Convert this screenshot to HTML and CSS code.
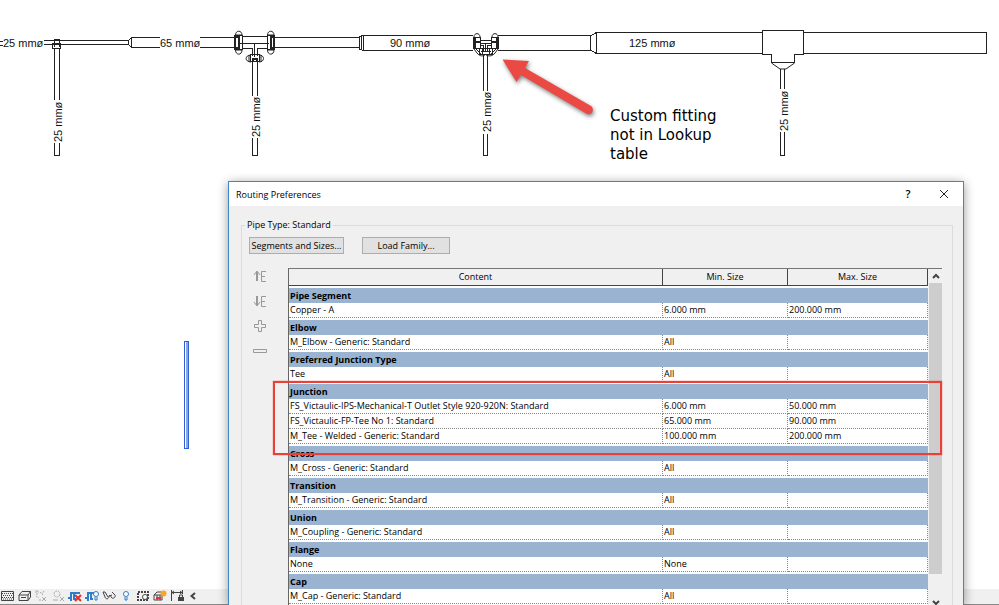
FILE: index.html
```html
<!DOCTYPE html>
<html lang="en">
<head>
    <meta charset="UTF-8">
    <meta name="viewport" content="width=device-width, initial-scale=1.0">
    <title>Routing Preferences</title>
    <link rel="stylesheet" href="styles.css">
</head>
<body>

<main class="canvas">
    <!-- pipe run -->
    <svg class="drawing" width="999" height="460" viewBox="0 0 999 460">
        <g class="lines">
            <!-- 25 mm run -->
            <path d="M0 41.5H3M0 45.5H3M44 40.5H128.500M44 44.500H128.500"/>
            <path d="M54.500 39.500H59.500V43.500H54.500ZM52.500 43.500H60.500V48.500H52.500ZM54.500 44V47M59.500 44V47"/>
            <path d="M54.500 49V100M59.500 49V100M54.500 143V155.500H59.500V143"/>
            <path d="M128.500 40.500V44.500L131.500 47.500V37.500Z"/>
            <!-- 65 mm run -->
            <path d="M160 37.500H131.500V47.500H160M200 37.500H234M200 47.500H234M274 37.500H359.500V47.500H274"/>
            <path d="M242 36.500H267M239 43.500H269M242 48.500H252.500V56M257.500 56V48.500H267M254.500 43.500V57"/>
            <path d="M234.500 35.500H242.500V49.500H234.500ZM267.500 35.500H274.500V49.500H267.500Z"/>
            <path stroke-width="2" d="M235 37H239V48H235ZM271 37H274V48H271Z"/>
            <path d="M250.500 54.500H259.500V61.500H250.500ZM252.500 62V96M257.500 62V96M252.500 138V155.500H257.500V138"/>
            <path stroke-width="2" d="M253 62V59H257V62"/>
            <!-- 90 mm run -->
            <path d="M359.500 36.500L363.500 35.500V50.500L359.500 49.500ZM361.500 36V50"/>
            <path d="M363.500 35.500H473M363.500 50.500H473M498 35.500H590.500V50.500H498"/>
            <path d="M483.500 55V91M487.500 55V91M483.500 134V155.500H487.500V134"/>
            <path d="M473.500 37.500H480.500V48.500H473.500ZM491.500 37.500H498.500V48.500H491.500ZM480 40.500H491M480 43.500H491M480 45.500H483.500V52M487.500 52V45.500H491M485.500 43V51"/>
            <path stroke-width="2" d="M473 42H480M492 42H499M475 38V48M497 38V48"/>
            <path d="M479.500 48.500H492.500V54.500H479.500ZM481 51.500H491M482.500 49V54M489.500 49V54"/>
            <!-- 125 mm run -->
            <path d="M591 35.500L596.500 32.500V53.500L591 50.500"/>
            <path d="M762 32.500H596.500V53.500H762M803 32.500H986.500V53.500H803"/>
            <path d="M762.500 30.500H803.500V54.500H794.500V62.500H771.500V54.500H762.500Z"/>
            <path d="M780.500 69V89M784.500 69V89M780.500 132V155.500H784.500V132"/>
        </g>
        <g class="curves">
            <path d="M235.500 35C235.500 30 242 30 242 35ZM267.500 35C267.500 30 274 30 274 35ZM235.500 50C235.500 55.500 242 55.500 242 50ZM267.500 50C267.500 55.500 274 55.500 274 50Z"/>
            <path d="M251 55C244.500 55 244.500 62 251 62M259 55C265 55 265 62 259 62M249 55V62M261 55V62"/>
            <path d="M474 37C474 32.500 480 32.500 480 37M492 37C492 32.500 498 32.500 498 37M474 49L477 53C480 57 484 56 485 55M498 49L495 53C492 57 488 56 486 55M476 49L482 55M496 49L490 55"/>
            <path d="M771.500 63L780 69H786L794.500 63"/>
        </g>
        <g class="sizes">
            <text x="3" y="47">25 mmø</text>
            <text x="160" y="47">65 mmø</text>
            <text x="390" y="47">90 mmø</text>
            <text x="629" y="47">125 mmø</text>
            <text transform="translate(62 142) rotate(-90)">25 mmø</text>
            <text transform="translate(260 137) rotate(-90)">25 mmø</text>
            <text transform="translate(491 132) rotate(-90)">25 mmø</text>
            <text transform="translate(788 131) rotate(-90)">25 mmø</text>
        </g>
        <!-- selected pipe -->
        <rect x="186" y="342" width="3" height="106" fill="#8ba6e0"/>
        <rect x="184.500" y="341.500" width="4" height="107" fill="none" stroke="#2f5fd0"/>
        <g class="arrow">
            <path d="M502.500 59.500L529 61L525 68L591 106C595 109 592 116 587 114L521 75L516.500 82Z"/>
        </g>
    </svg>
    <p class="note">Custom fitting<br>not in Lookup<br>table</p>
</main>

<footer class="view-bar">
    <button aria-label="Detail level"><svg viewBox="0 0 14 14"><path class="k" d="M1.500 2.500H13.500V11.500H1.500Z"/><path class="k" stroke-dasharray="1 1" d="M2 4.500H13M3 6.500H13M2 8.500H13M3 10H13"/></svg></button>
    <button aria-label="Visual style"><svg viewBox="0 0 14 14"><path class="k" d="M2 6L5 2.500H13.500L11 6ZM2 6V11.500H11V6M11 11.500L13.500 8V2.500M4 8.500H9"/></svg></button>
    <button aria-label="Sun path"><svg viewBox="0 0 14 14"><path class="g" stroke-dasharray="2 1" d="M1 3H5M3 1V6M2 7L5 9M6 3L9 6M10 2L8 5M5 11H8"/><path class="g" d="M8 8L12 12M12 8L8 12"/></svg></button>
    <button aria-label="Shadows"><svg viewBox="0 0 14 14"><circle class="g" cx="6" cy="5" r="3" stroke-dasharray="2 1"/><path class="g" d="M2 11H7M9 8L13 12M13 8L9 12"/></svg></button>
    <button aria-label="Crop view"><svg viewBox="0 0 14 14"><path class="b thick" d="M3 12V4H12M0 9H4M6 3V10H8"/><path class="r" d="M7 6L13 12M13 6L7 12"/></svg></button>
    <button aria-label="Show crop region"><svg viewBox="0 0 14 14"><path class="b thick" d="M3 12V4H9M0 9H4M6 3V10H8"/><circle class="b" cx="11" cy="5" r="2.500" fill="#fff"/><path class="b" d="M10 8V11H12V8"/></svg></button>
    <button aria-label="Temporary hide"><svg viewBox="0 0 14 14"><path class="k" d="M1 3H3L6 8M1 3L3 8C4 11 7 10 7 7C8 6 9 7 9 8C11 11 14 8 13 6L10 3M7 7L10 6"/></svg></button>
    <button aria-label="Reveal hidden"><svg viewBox="0 0 14 14"><circle class="b" cx="7" cy="5" r="2.500" fill="#fff"/><path class="b" d="M6 8V11H8V8"/></svg></button>
    <button aria-label="View properties"><svg viewBox="0 0 14 14"><path class="k" stroke-width="2" stroke-dasharray="2 1" d="M2 3H12V11H2Z"/><circle class="k" cx="9" cy="8" r="2.500" fill="#fff"/></svg></button>
    <button aria-label="Analytical model"><svg viewBox="0 0 14 14"><path class="k" d="M1 6L4 3H8M1 6V11H9V6ZM4 6V11M7 6V11"/><path class="r" d="M3 9H8"/><circle cx="10.500" cy="4.500" r="3" fill="#f5a623"/></svg></button>
    <button aria-label="Constraints"><svg viewBox="0 0 14 14"><path class="k" d="M1.500 1V12M12.500 1V5M2 3.500H12M4 2L2 3.500L4 5M10 2L12 3.500L10 5"/><rect x="8" y="8" width="6" height="4" fill="#444"/><path class="k" d="M9.500 8V6H12.500V8"/></svg></button>
    <button aria-label="Collapse"><svg viewBox="0 0 14 14"><path class="k thick" d="M8 4L4.500 7L8 10"/></svg></button>
</footer>

<section class="dialog" role="dialog" aria-labelledby="dialog-title">
    <header class="title-bar">
        <h1 id="dialog-title">Routing Preferences</h1>
        <button class="help">?</button>
        <button class="close" aria-label="Close"><svg viewBox="0 0 10 10"><path d="M1 1L9 9M9 1L1 9"/></svg></button>
    </header>

    <fieldset class="group">
        <legend>Pipe Type: Standard</legend>
        <div class="actions">
            <button class="btn segments">Segments and Sizes...</button>
            <button class="btn load">Load Family...</button>
        </div>
        <div class="editor">
            <div class="tools">
                <button aria-label="Move row up"><svg viewBox="0 0 14 14"><path stroke-width="2" d="M4 3V12"/><path d="M1 6L4 2L7 6M13 2.500H8.500V12.500H13M8.500 7.500H12"/></svg></button>
                <button aria-label="Move row down"><svg viewBox="0 0 14 14"><path stroke-width="2" d="M4 2V11"/><path d="M1 8L4 12L7 8M13 2.500H8.500V12.500H13M8.500 7.500H12"/></svg></button>
                <button aria-label="Add row"><svg viewBox="0 0 14 14"><path d="M5.500 1.500H8.500V5.500H12.500V8.500H8.500V12.500H5.500V8.500H1.500V5.500H5.500Z"/></svg></button>
                <button aria-label="Remove row"><svg viewBox="0 0 14 14"><path d="M.5 5.500H13.500V8.500H.5Z"/></svg></button>
            </div>
            <div class="grid">
                <table>
                    <colgroup><col><col class="min"><col class="max"></colgroup>
                    <thead>
                        <tr><th>Content</th><th>Min. Size</th><th>Max. Size</th></tr>
                    </thead>
                    <tbody>
                        <tr class="part"><th colspan="3">Pipe Segment</th></tr>
                        <tr><td>Copper - A</td><td>6.000 mm</td><td>200.000 mm</td></tr>
                        <tr class="part"><th colspan="3">Elbow</th></tr>
                        <tr><td>M_Elbow - Generic: Standard</td><td>All</td><td></td></tr>
                        <tr class="part"><th colspan="3">Preferred Junction Type</th></tr>
                        <tr><td>Tee</td><td>All</td><td></td></tr>
                        <tr class="part"><th colspan="3">Junction</th></tr>
                        <tr><td>FS_Victaulic-IPS-Mechanical-T Outlet Style 920-920N: Standard</td><td>6.000 mm</td><td>50.000 mm</td></tr>
                        <tr><td>FS_Victaulic-FP-Tee No 1: Standard</td><td>65.000 mm</td><td>90.000 mm</td></tr>
                        <tr><td>M_Tee - Welded - Generic: Standard</td><td>100.000 mm</td><td>200.000 mm</td></tr>
                        <tr class="part"><th colspan="3">Cross</th></tr>
                        <tr><td>M_Cross - Generic: Standard</td><td>All</td><td></td></tr>
                        <tr class="part"><th colspan="3">Transition</th></tr>
                        <tr><td>M_Transition - Generic: Standard</td><td>All</td><td></td></tr>
                        <tr class="part"><th colspan="3">Union</th></tr>
                        <tr><td>M_Coupling - Generic: Standard</td><td>All</td><td></td></tr>
                        <tr class="part"><th colspan="3">Flange</th></tr>
                        <tr><td>None</td><td>None</td><td></td></tr>
                        <tr class="part"><th colspan="3">Cap</th></tr>
                        <tr><td>M_Cap - Generic: Standard</td><td>All</td><td></td></tr>
                    </tbody>
                </table>
                <div class="scrollbar">
                    <button aria-label="Scroll up"><svg viewBox="0 0 8 8"><path d="M1 6L4 3L7 6"/></svg></button>
                    <div class="track"><div class="thumb"></div></div>
                    <button aria-label="Scroll down"><svg viewBox="0 0 8 8"><path d="M1 2L4 5L7 2"/></svg></button>
                </div>
                <div class="highlight"></div>
            </div>
        </div>
    </fieldset>
</section>

</body>
</html>
```
FILE: styles.css
```css
* {
    margin: 0;
    padding: 0;
    box-sizing: border-box;
}
body {
    position: relative;
    display: flex;
    flex-direction: column;
    height: 100vh;
    overflow: hidden;
    background: #fff;
    color: #000;
    font-family: "Open Sans", "Noto Sans", sans-serif;
    font-size: 9px;
}
button {
    border: none;
    background: none;
    color: inherit;
    font: inherit;
}
svg {
    display: block;
    fill: none;
}

/* drawing area */
.canvas {
    position: relative;
    flex: 1;
    min-height: 0;
}
.lines {
    stroke: #222;
    shape-rendering: crispEdges;
}
.curves {
    stroke: #222;
}
.sizes {
    fill: #111;
    font-family: "Liberation Sans", Arial, sans-serif;
    font-size: 11px;
}
.arrow {
    fill: #ea4a43;
    filter: drop-shadow(1px 2px 2px rgba(0, 0, 0, 0.5));
}
.note {
    position: absolute;
    left: 610px;
    top: 107px;
    font-family: "DejaVu Sans", Verdana, sans-serif;
    font-size: 15px;
    line-height: 19px;
}

/* view control bar */
.view-bar {
    display: flex;
    align-items: center;
    height: 16px;
    flex-shrink: 0;
    padding-bottom: 2px;
    background: #f0f0f0;
    border-bottom: 1px solid #888;
}
.view-bar button {
    width: 17px;
}
.view-bar svg {
    width: 14px;
    height: 14px;
}
.k { stroke: #444; }
.g { stroke: #aaa; }
.b { stroke: #2f7cc8; }
.r { stroke: #e03030; stroke-width: 2; }
.thick { stroke-width: 2; }

/* dialog */
.dialog {
    position: absolute;
    left: 228px;
    right: 35px;
    top: 181px;
    bottom: 0;
    display: flex;
    flex-direction: column;
    background: #f0f0f0;
    border: 1px solid #3c87c4;
    border-bottom: none;
    box-shadow: 0 2px 10px rgba(0, 0, 0, 0.4);
}
.title-bar {
    display: flex;
    align-items: center;
    height: 24px;
    flex-shrink: 0;
    padding: 0 10px 0 7px;
    background: #fff;
}
.title-bar h1 {
    flex: 1;
    font-size: 9px;
    font-weight: normal;
}
.title-bar button {
    width: 18px;
    height: 18px;
}
.title-bar .help {
    margin-right: 18px;
    font-size: 11px;
    font-weight: 600;
    line-height: 16px;
}
.close svg {
    width: 10px;
    height: 10px;
    margin: auto;
    stroke: #222;
}
.group {
    flex: 1;
    min-height: 0;
    margin: 12px 10px 0 12px;
    padding: 0 10px 0 7px;
    border: 1px solid #dcdcdc;
    border-bottom: none;
}
.group legend {
    margin-left: -4px;
    padding: 0 2px;
    line-height: 14px;
}
.actions {
    display: flex;
    gap: 18px;
    padding-top: 5px;
}
.btn {
    height: 17px;
    border: 1px solid #adadad;
    background: #e1e1e1;
    line-height: 15px;
}
.segments { width: 95px; }
.load { width: 88px; }
.editor {
    display: flex;
    margin-top: 14px;
}
.tools {
    display: flex;
    flex-direction: column;
    gap: 11px;
    width: 39px;
    padding: 1px 0 0 4px;
}
.tools button {
    width: 14px;
    height: 14px;
}
.tools svg {
    width: 14px;
    height: 14px;
    stroke: #999;
}
.grid {
    position: relative;
    display: flex;
    align-items: flex-start;
    flex: 1;
    background: #fff;
    border-top: 1px solid #777;
    border-left: 1px solid #666;
}
table {
    flex: 1;
    table-layout: fixed;
    border-collapse: separate;
    border-spacing: 0;
}
.min { width: 125px; }
.max { width: 140px; }
thead th {
    height: 17px;
    border-right: 1px solid #444;
    border-bottom: 1px solid #444;
    background: #f0f0f0;
    font-weight: normal;
    line-height: 16px;
}
.part th {
    height: 17px;
    padding-left: 1px;
    border-top: 2px solid #fff;
    background: #99b3d1;
    text-align: left;
    line-height: 15px;
}
td {
    height: 15px;
    padding-left: 1px;
    border-right: 1px dotted #888;
    border-bottom: 1px dotted #888;
    line-height: 14px;
    white-space: nowrap;
}
.scrollbar {
    display: flex;
    flex-direction: column;
    width: 14px;
    height: 341px;
    padding-left: 1px;
    background: #f0f0f0;
}
.scrollbar button {
    height: 14px;
}
.scrollbar svg {
    width: 8px;
    height: 8px;
    margin: auto;
    stroke: #444;
    stroke-width: 2;
}
.track {
    flex: 1;
}
.thumb {
    height: 93%;
    background: #cdcdcd;
}
/* marks the junction rows */
.highlight {
    position: absolute;
    left: -16px;
    right: 0;
    top: 112px;
    height: 74px;
    border: 2px solid #ea4038;
    box-shadow: 0 0 1px #ea4038;
}
```
